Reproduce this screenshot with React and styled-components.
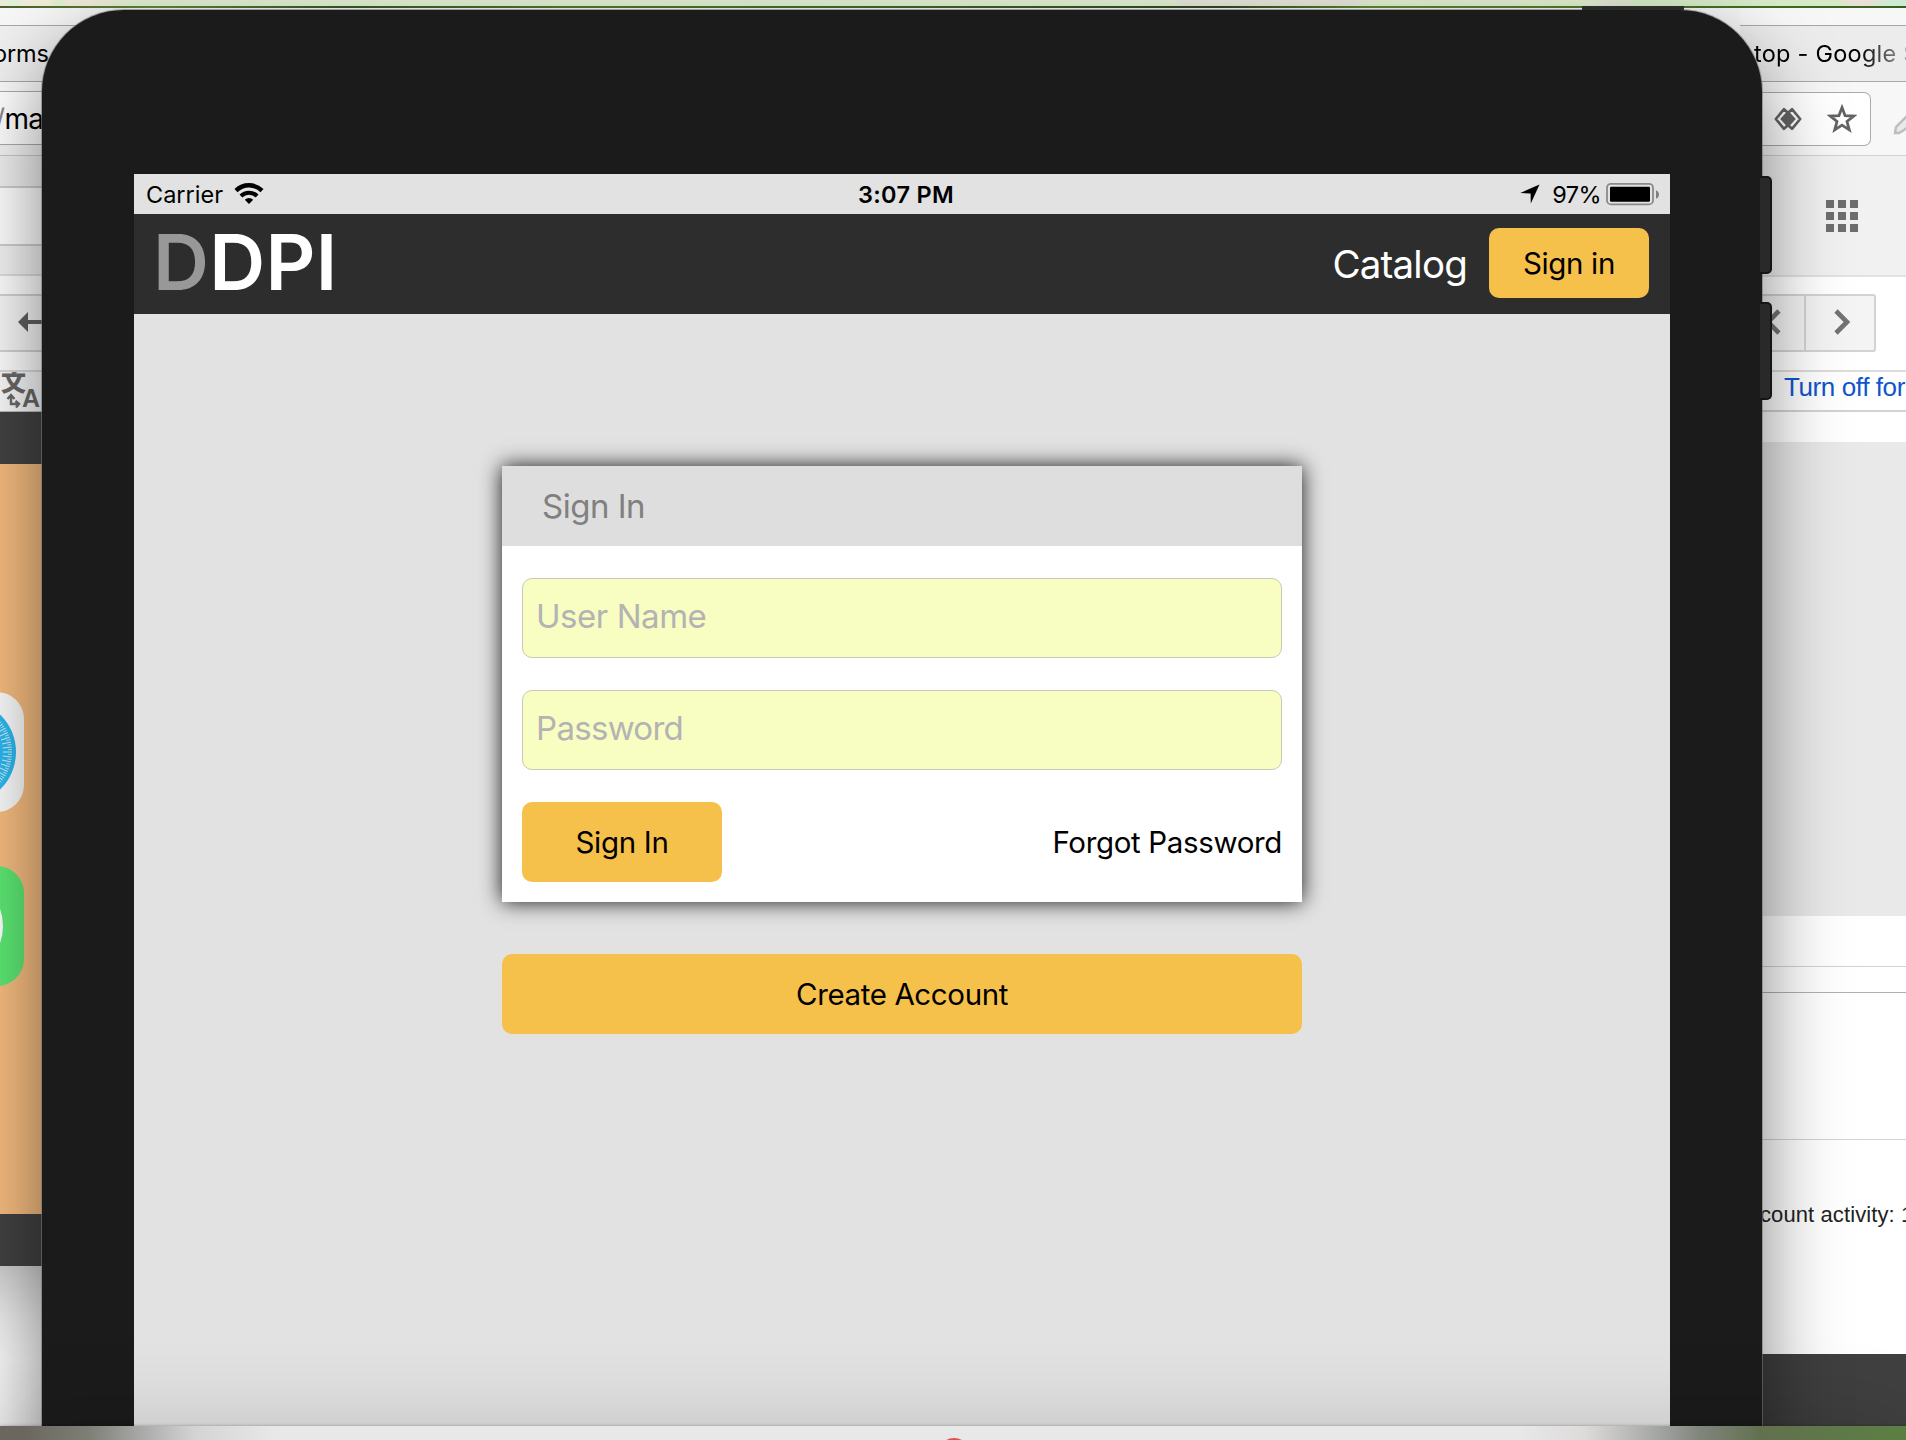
import React from "react";
import styled, { createGlobalStyle } from "styled-components";

const GlobalStyle = createGlobalStyle`
  *, *::before, *::after { box-sizing: border-box; }
  html, body { margin: 0; padding: 0; overflow: hidden; }
  body { font-family: Inter, Roboto, "Liberation Sans", sans-serif; color: #000; }
`;

/* ---------- desktop ---------- */

const Desktop = styled.div`
  position: relative;
  width: 1906px;
  height: 1440px;
  overflow: hidden;
  background: #f4f4f4;
  display: flex;
  flex-direction: column;
`;

const MenuBar = styled.div`
  flex: none;
  height: 6px;
  background: linear-gradient(90deg, #ececdf 0, #dff0d8 10px, #efecdc 26px, #f0edd8 50px, #def0cc 58px, #efecdc 70px, #efedd8 105px, #e4f2d6 125px, #e4f2d6 1170px, #e8e8dc 1185px, #e8e8dc 1350px, #e2f0d2 1375px, #e2f0d0 1590px, #e4e6d8 1612px, #d6ecc8 1640px, #d6eac8 1840px, #eadfd4 1850px, #eadfd4 1866px, #cdead2 1890px);
`;

const Wallpaper = styled.div`
  flex: none;
  height: 2px;
  background: linear-gradient(90deg, #4d5c2c, #5c8a3a 8%, #2f5a24 18%, #4c7a2c 30%, #3d6c28 46%, #2c4a1e 64%, #5a8a30 72%, #36601f 100%);
`;

const Columns = styled.div`
  flex: 1;
  display: flex;
  justify-content: space-between;
`;

const Column = styled.div`
  width: ${(p) => p.$width}px;
  display: flex;
  flex-direction: column;
  overflow: hidden;
`;

const Band = styled.div`
  flex: none;
  height: ${(p) => p.$h}px;
  background: ${(p) => p.$bg || "#fff"};
  border-bottom: ${(p) => (p.$line ? `${p.$lineWidth || 1}px solid ${p.$line}` : "none")};
  display: flex;
  align-items: ${(p) => p.$align || "center"};
  overflow: hidden;
`;

const TabText = styled.span`
  font-size: 23.5px;
  line-height: 28px;
  white-space: nowrap;
  letter-spacing: ${(p) => p.$spacing || 0}px;
  margin-left: ${(p) => p.$left}px;
  ${(p) =>
    p.$fade &&
    `background: linear-gradient(90deg, #000 105px, #777 140px, #c4c4c4 160px);
     -webkit-background-clip: text; background-clip: text; color: transparent;`}
`;

const AddressText = styled.span`
  font-size: 28px;
  line-height: 34px;
  margin-left: -5px;
  margin-top: 2px;
  letter-spacing: -0.7px;
  white-space: nowrap;
`;

const Slash = styled.span`
  color: #888;
`;

const AddressBox = styled.div`
  flex: none;
  width: 131px;
  height: 54px;
  background: #fff;
  border: 1px solid #ababab;
  border-left: none;
  border-radius: 0 7px 7px 0;
  display: flex;
  align-items: center;
  padding-left: 34px;
  gap: 25px;
  color: #636363;
`;

const Toolbar = styled(Band)`
  gap: 21px;
`;

const AppGrid = styled.div`
  display: grid;
  grid-template-columns: repeat(3, 8px);
  grid-auto-rows: 8px;
  gap: 4px;
  margin-left: 86px;
`;

const AppDot = styled.i`
  background: #6e6e6e;
`;

const Pager = styled.div`
  display: flex;
  width: 136px;
  height: 58px;
  margin-top: 17px;
  border: 2px solid #d3d3d3;
  border-radius: 3px;
  background: #f4f4f4;
`;

const PagerButton = styled.div`
  width: ${(p) => p.$w}px;
  padding: 0 0 3px ${(p) => p.$pl || 0}px;
  border-right: ${(p) => (p.$divider ? "2px solid #d3d3d3" : "none")};
  display: flex;
  align-items: center;
  justify-content: center;
`;

const LinkText = styled.a`
  font-family: "Liberation Sans", Arial, sans-serif;
  font-size: 26px;
  line-height: 30px;
  letter-spacing: -0.4px;
  color: #1155cc;
  white-space: nowrap;
  margin-left: 44px;
  margin-bottom: 9px;
`;

const ActivityText = styled.span`
  font-family: "Liberation Sans", Arial, sans-serif;
  font-size: 22px;
  line-height: 26px;
  letter-spacing: 0.1px;
  color: #222;
  white-space: nowrap;
  margin-left: 20px;
  margin-top: 62px;
`;

const HomeScreen = styled(Band)`
  flex-direction: column;
  align-items: flex-start;
  padding-top: 228px;
  gap: 54px;
`;

const AppIcon = styled.svg`
  flex: none;
  display: block;
`;

/* ---------- tablet ---------- */

const Tablet = styled.div`
  position: absolute;
  left: 42px;
  top: 10px;
  width: 1720px;
  height: 1500px;
  padding: 164px 92px 0;
  background: #1b1b1b;
  border-radius: 82px 82px 0 0;
  box-shadow: 0 0 0 1px rgba(115, 115, 115, 0.6), 0 34px 80px rgba(0, 0, 0, 0.5);
`;

const SideButton = styled.div`
  position: absolute;
  left: 1718px;
  top: ${(p) => p.$top}px;
  width: 12px;
  height: 98px;
  background: #292929;
  border: 2px solid #151515;
  border-left: none;
  border-radius: 0 5px 5px 0;
`;

const PowerButton = styled.div`
  position: absolute;
  left: 1540px;
  top: -4px;
  width: 102px;
  height: 4px;
  background: #2b2d2a;
`;

const Screen = styled.div`
  width: 1536px;
  height: 1300px;
  background: #e2e2e2;
  display: flex;
  flex-direction: column;
  align-items: center;
`;

const StatusBar = styled.div`
  width: 100%;
  height: 40px;
  display: grid;
  grid-template-columns: 1fr auto 1fr;
  align-items: center;
  padding: 1px 10px 0 12px;
  font-size: 23.5px;
  line-height: 28px;
`;

const StatusSide = styled.div`
  display: flex;
  align-items: center;
  justify-content: ${(p) => (p.$end ? "flex-end" : "flex-start")};
`;

const StatusText = styled.span`
  letter-spacing: ${(p) => p.$spacing || 0}px;
  font-weight: ${(p) => (p.$strong ? 600 : 400)};
  margin-left: ${(p) => p.$left || 0}px;
  margin-right: ${(p) => p.$right || 0}px;
  padding-top: 1px;
  white-space: nowrap;
`;

const StatusGlyph = styled.svg`
  display: block;
  margin-top: -1px;
`;

const NavBar = styled.div`
  width: 100%;
  height: 100px;
  background: #2d2d2d;
  display: flex;
  align-items: center;
  padding: 0 21px 2px 19px;
`;

const Logo = styled.div`
  color: #fff;
  font-size: 77.5px;
  line-height: 94px;
  font-weight: 600;
  letter-spacing: 0.3px;
  margin-right: auto;
  padding-bottom: 2px;
`;

const LogoMuted = styled.span`
  color: #989898;
`;

const NavLink = styled.a`
  color: #fff;
  font-size: 38.5px;
  line-height: 46px;
  letter-spacing: -0.8px;
  margin-right: 22px;
  padding-top: 2px;
`;

const Button = styled.button`
  width: ${(p) => p.$w}px;
  height: ${(p) => p.$h || 80}px;
  margin: ${(p) => p.$mt || 0}px 0 0;
  padding: 0;
  border: 0;
  border-radius: 10px;
  background: #f6c14a;
  color: #000;
  font: 400 29.5px/36px Inter, Roboto, sans-serif;
  letter-spacing: ${(p) => p.$spacing || 0}px;
`;

const Card = styled.div`
  width: 800px;
  margin: 152px 0 0;
  background: #fff;
  box-shadow: 0 0 20px rgba(0, 0, 0, 0.9);
`;

const CardHeader = styled.div`
  height: 80px;
  padding-left: 40px;
  background: #dedede;
  color: #808080;
  font-size: 33px;
  line-height: 80px;
  letter-spacing: -0.5px;
`;

const CardBody = styled.div`
  display: flex;
  flex-direction: column;
  gap: 32px;
  padding: 32px 20px 20px;
`;

const Field = styled.label`
  height: 80px;
  padding: 0 0 0 13px;
  border: 1px solid #c8cbb6;
  border-radius: 10px;
  background: #f8fdc2;
  color: #b3b3b3;
  font-size: 33px;
  line-height: 74px;
  letter-spacing: ${(p) => p.$spacing}px;
`;

const Actions = styled.div`
  display: flex;
  align-items: center;
  justify-content: space-between;
`;

const TextLink = styled.a`
  font-size: 29.5px;
  line-height: 36px;
  letter-spacing: -0.35px;
`;

/* ---------- foreground window edge ---------- */

const DockWindow = styled.div`
  position: absolute;
  left: 0;
  top: 1426px;
  width: 1906px;
  height: 300px;
  background: linear-gradient(90deg, #6b675e 0, #6b675e 25px, #7d7e75 88px, #b0b0b0 150px, #d4d4d4 195px, #e8e8e8 275px, #e8e8e8 1520px, #dddada 1585px, #a8aaa8 1652px, #80857c 1700px, #62704f 1761px, #5b8042 1906px);
  box-shadow: 0 0 3px rgba(0, 0, 0, 0.3), 0 10px 90px rgba(0, 0, 0, 0.2);
  display: flex;
  justify-content: center;
  padding: 12px 0 0 2px;
`;

const Badge = styled.div`
  width: 32px;
  height: 32px;
  border-radius: 50%;
  background: #e0504f;
`;

/* ---------- icons ---------- */

const WifiIcon = () => (
  <StatusGlyph width="30" height="22" viewBox="0 0 30 22">
    <path d="M2 7.6a18.6 18.6 0 0 1 26 0" fill="none" stroke="#000" strokeWidth="4.4" />
    <path d="M6.9 13a11.5 11.5 0 0 1 16.2 0" fill="none" stroke="#000" strokeWidth="4" />
    <path d="M15 21l-4.2-4.3a6 6 0 0 1 8.4 0z" fill="#000" />
  </StatusGlyph>
);

const LocationIcon = () => (
  <StatusGlyph width="20" height="20" viewBox="0 0 20 20">
    <path d="M19.5.5L10.8 19.4 10.6 9.4.3 9z" fill="#000" />
  </StatusGlyph>
);

const BatteryIcon = () => (
  <StatusGlyph width="54" height="24" viewBox="0 0 54 24">
    <rect x="1" y="1.8" width="46" height="20.6" rx="4" fill="none" stroke="#8a8a8a" strokeWidth="1.8" />
    <rect x="4" y="4.7" width="40" height="15" rx="1.2" fill="#000" />
    <path d="M50 8.2a4.6 4.6 0 0 1 0 8.6z" fill="#808080" />
  </StatusGlyph>
);

const DiamondIcon = () => (
  <svg width="28" height="24" viewBox="0 0 28 24">
    <path d="M10 2.2L1.8 12 10 21.8 14 18l4 3.8 8.2-9.8L18 2.2 14 6z" fill="none" stroke="#636363" strokeWidth="2.6" strokeLinejoin="round" />
    <path d="M14 3.6L21.8 12 14 20.4 6.2 12z" fill="#636363" />
  </svg>
);

const StarIcon = () => (
  <svg width="30" height="30" viewBox="0 0 30 30">
    <path d="M15 3.6l3.1 8.1 8.6.4-6.7 5.4 2.3 8.4-7.3-4.8-7.3 4.8L10 17.500l-6.700-5.400 8.600-.4z" fill="none" stroke="#636363" strokeWidth="2.800" />
  </svg>
);

const PickerIcon = () => (
  <svg width="34" height="30" viewBox="0 0 34 30" style={undefined}>
    <path d="M3 27l1-6L24 1l8 8-20 15-5 3z" fill="#e9e9e9" stroke="#bdbdbd" strokeWidth="2.4" />
  </svg>
);

const PickerSlot = styled.div`
  flex: none;
  display: flex;
  padding-top: 4px;
`;

const Chevron = ({ left }) => (
  <svg width="18" height="28" viewBox="0 0 18 28">
    <path d={left ? "M15 3L4 14l11 11" : "M3 3l11 11L3 25"} fill="none" stroke="#737373" strokeWidth="4.6" />
  </svg>
);

const BackArrow = () => (
  <svg width="44" height="24" viewBox="0 0 44 24">
    <path d="M18 11L28 1v8h16v4H28v8z" fill="#606060" />
  </svg>
);

const TranslateIcon = () => (
  <svg width="42" height="40" viewBox="0 2 42 40" fill="#6a6a6a">
    <text x="1" y="21" fontSize="25" fontWeight="900" fontFamily="Noto Sans CJK SC, sans-serif">文</text>
    <text x="22" y="37" fontSize="25" fontWeight="700" fontFamily="Liberation Sans, sans-serif">A</text>
    <path d="M7.5 29l3.5-4 3.5 4M11 26v8h8M15.5 31l3.5 3-3 3.5" fill="none" stroke="#6a6a6a" strokeWidth="2.4" />
  </svg>
);

const ticks = Array.from({ length: 19 }, (_, i) => -54 + i * 6);

const SafariIcon = () => (
  <AppIcon width="24" height="120" viewBox="96 0 24 120">
    <rect width="120" height="120" rx="27" fill="#fbfbfb" />
    <circle cx="60" cy="60" r="52" fill="#2bb8f0" />
    {ticks.map((deg) => (
      <React.Fragment key={deg}>
        <line x1="39" x2="48" y1="0" y2="0" stroke="#fff" strokeWidth="1" opacity="0.8" transform={`translate(60 60) rotate(${deg})`} />
        <line x1="44" x2="48" y1="0" y2="0" stroke="#fff" strokeWidth="0.8" opacity="0.8" transform={`translate(60 60) rotate(${deg + 3})`} />
      </React.Fragment>
    ))}
  </AppIcon>
);

const MessagesIcon = () => (
  <AppIcon width="24" height="120" viewBox="96 0 24 120">
    <rect width="120" height="120" rx="27" fill="#5ce873" />
    <ellipse cx="60" cy="60" rx="39" ry="45" fill="#fff" />
  </AppIcon>
);

/* ---------- background windows ---------- */

const LeftColumn = () => (
  <Column $width={80}>
    <Band $h={18} $bg="#f7f7f7" $line="#a8a8a8" />
    <Band $h={56} $bg="#efefef" $line="#a8a8a8">
      <TabText $left={-7} $spacing={-0.1}>orms</TabText>
    </Band>
    <Band $h={10} $bg="#f9f9f9" $line="#ababab" />
    <Band $h={53} $line="#ababab">
      <AddressText><Slash>/</Slash>ma</AddressText>
    </Band>
    <Band $h={11} $bg="#f4f4f4" $line="#c8c8c8" />
    <Band $h={32} $bg="#f0f0f0" $line="#cfcfcf" $lineWidth={2} />
    <Band $h={58} $bg="#fff" $line="#cfcfcf" $lineWidth={2} />
    <Band $h={30} $bg="#f3f3f3" $line="#dedede" $lineWidth={2} />
    <Band $h={20} $bg="#fff" $line="#d3d3d3" $lineWidth={2} />
    <Band $h={56} $bg="#f8f8f8" $line="#d3d3d3" $lineWidth={2}>
      <BackArrow />
    </Band>
    <Band $h={20} $bg="#fff" $line="#dcdcdc" $lineWidth={2} />
    <Band $h={40} $bg="#fbfbfb" $line="#bdbdbd">
      <TranslateIcon />
    </Band>
    <Band $h={52} $bg="#434343" />
    <HomeScreen $h={750} $bg="#f7bd80" $align="flex-start">
      <SafariIcon />
      <MessagesIcon />
    </HomeScreen>
    <Band $h={52} $bg="#424242" />
    <Band $h={174} $bg="linear-gradient(180deg, #cfcfcf, #ececec 50px, #f9f9f9 90px)" />
  </Column>
);

const RightColumn = () => (
  <Column $width={166}>
    <Band $h={18} $bg="#f7f7f7" $line="#a8a8a8" />
    <Band $h={56} $bg="#ececec" $line="#a8a8a8">
      <TabText $left={14} $spacing={0.25} $fade>top - Google S</TabText>
    </Band>
    <Toolbar $h={74} $bg="#f7f7f7" $line="#d0d0d0">
      <AddressBox>
        <DiamondIcon />
        <StarIcon />
      </AddressBox>
      <PickerSlot>
        <PickerIcon />
      </PickerSlot>
    </Toolbar>
    <Band $h={121} $bg="#f1f1f1" $line="#e2e2e2" $lineWidth={2}>
      <AppGrid>
        {Array.from({ length: 9 }, (_, i) => <AppDot key={i} />)}
      </AppGrid>
    </Band>
    <Band $h={95} $align="flex-start" $line="#dcdcdc" $lineWidth={2}>
      <Pager>
        <PagerButton $w={66} $divider><Chevron left /></PagerButton>
        <PagerButton $w={70} $pl={4}><Chevron /></PagerButton>
      </Pager>
    </Band>
    <Band $h={40} $line="#d3d3d3" $lineWidth={2}>
      <LinkText>Turn off for</LinkText>
    </Band>
    <Band $h={30} />
    <Band $h={474} $bg="#e9e9e9" />
    <Band $h={51} $line="#d3d3d3" />
    <Band $h={26} $line="#b0b0b0" />
    <Band $h={147} $line="#d3d3d3" />
    <Band $h={214} $align="flex-start">
      <ActivityText>count activity: 1</ActivityText>
    </Band>
    <Band $h={90} $bg="#404040" />
  </Column>
);

export default function App() {
  return (
    <>
      <GlobalStyle />
      <Desktop>
        <MenuBar />
        <Wallpaper />
        <Columns>
          <LeftColumn />
          <RightColumn />
        </Columns>
        <Tablet>
          <PowerButton />
          <SideButton $top={166} />
          <SideButton $top={292} />
          <Screen>
            <StatusBar>
              <StatusSide>
                <StatusText $right={11}>Carrier</StatusText>
                <WifiIcon />
              </StatusSide>
              <StatusText $strong $left={6} $spacing={0.3}>3:07 PM</StatusText>
              <StatusSide $end>
                <LocationIcon />
                <StatusText $left={12} $right={5} $spacing={-0.6}>97%</StatusText>
                <BatteryIcon />
              </StatusSide>
            </StatusBar>
            <NavBar>
              <Logo><LogoMuted>D</LogoMuted>DPI</Logo>
              <NavLink>Catalog</NavLink>
              <Button $w={160} $h={70} $spacing={-0.35}>Sign in</Button>
            </NavBar>
            <Card>
              <CardHeader>Sign In</CardHeader>
              <CardBody>
                <Field $spacing={-0.45}>User Name</Field>
                <Field $spacing={-0.7}>Password</Field>
                <Actions>
                  <Button $w={200} $spacing={-0.3}>Sign In</Button>
                  <TextLink>Forgot Password</TextLink>
                </Actions>
              </CardBody>
            </Card>
            <Button $w={800} $mt={52} $spacing={-0.38}>Create Account</Button>
          </Screen>
        </Tablet>
        <DockWindow>
          <Badge />
        </DockWindow>
      </Desktop>
    </>
  );
}
